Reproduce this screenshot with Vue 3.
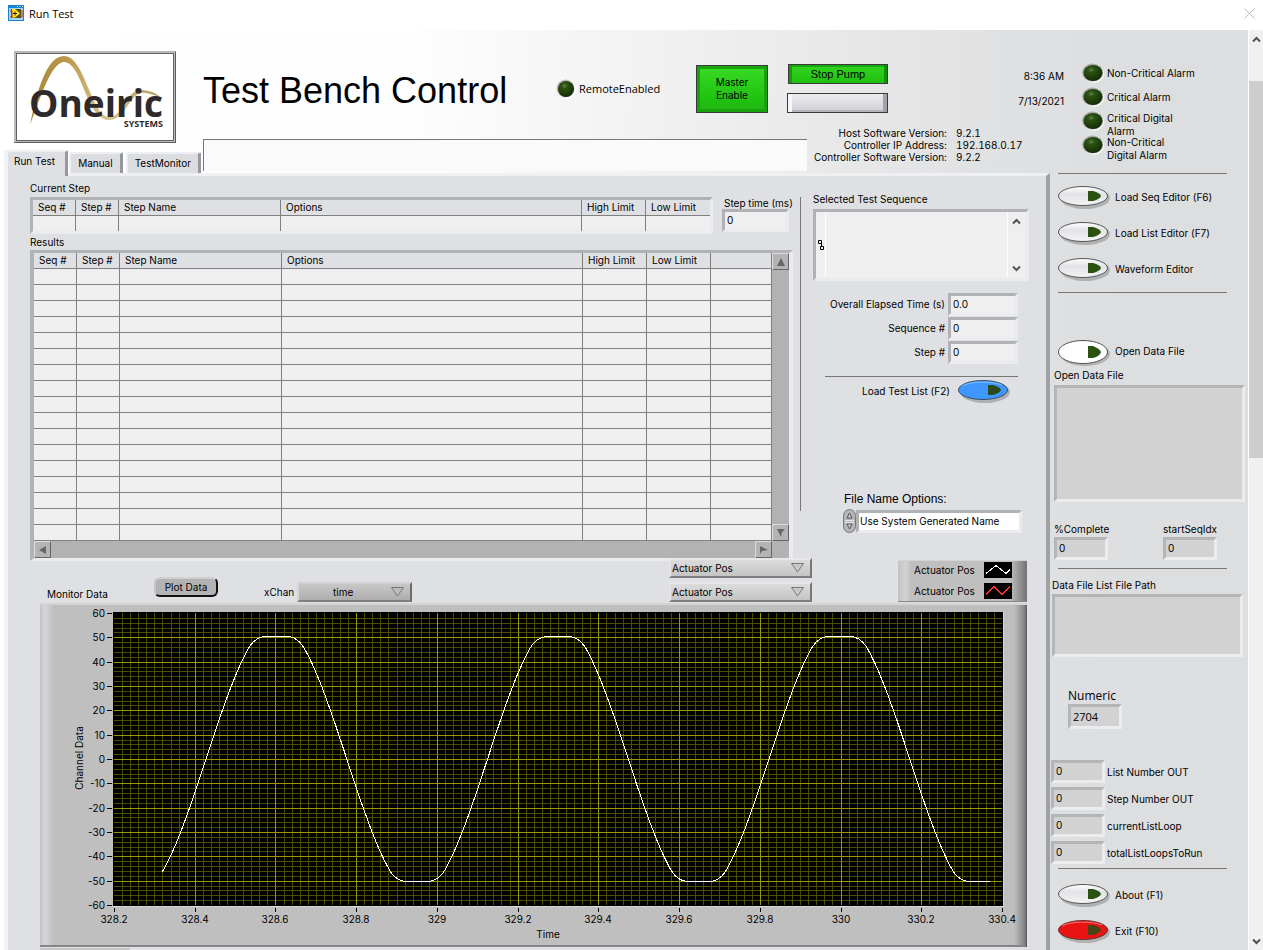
<template>
  <div class="window">
    <header class="titlebar">
      <svg class="app-icon" width="16" height="16" viewBox="0 0 16 16">
        <rect width="16" height="16" fill="#1883d7" />
        <path d="M9 1.5h1M11.5 1.5h1M14 1.5h1" stroke="#ffe38a" />
        <rect x="1" y="3" width="14" height="12" fill="#a9d5f5" />
        <rect x="3" y="4" width="10" height="9" fill="#55551c" />
        <path d="M4 4h3l5 4.500-5 4h-3z" fill="#ffe81a" />
        <path d="M2 6h2v6H2M14 5v7h-2" fill="none" stroke="#c22" />
        <path d="M5 8.500h4M7 6.500v4" stroke="#222" />
      </svg>
      <span class="titlebar-text">Run Test</span>
      <button class="close" aria-label="Close">
        <svg width="11" height="11" viewBox="0 0 11 11">
          <path d="M.5.5l10 10M10.5.5l-10 10" stroke="#bbb" fill="none" />
        </svg>
      </button>
    </header>

    <div class="client">
      <div class="panel">
        <div class="head">
          <div class="head-left">
            <div class="logo">
              <svg width="156" height="86" viewBox="0 0 156 86">
                <defs>
                  <linearGradient id="gold" x1="0" x2="1">
                    <stop offset="0" stop-color="#a88a3c" />
                    <stop offset=".25" stop-color="#b89546" />
                    <stop offset=".6" stop-color="#d9c694" />
                    <stop offset="1" stop-color="#b39a5b" />
                  </linearGradient>
                </defs>
                <path
                  d="M13 71C20 36 30 2 47 2C68 2 74 62 92 63C107 63 109 35 124 36C130 36 138 38 143 43C134 40 128 38 124 39C112 41 108 67 91 66C69 64 65 8 47 8C34 9 24 42 13 71Z"
                  fill="url(#gold)"
                />
                <text x="12" y="63" class="logo-name">Oneiric</text>
                <text x="146" y="73" text-anchor="end" class="logo-sub">SYSTEMS</text>
              </svg>
            </div>
            <div class="tabs" role="tablist">
              <button
                v-for="tab in tabs"
                :key="tab"
                class="tab"
                :class="{ active: tab === activeTab }"
                role="tab"
                :aria-selected="tab === activeTab"
                @click="activeTab = tab"
              >
                {{ tab }}
              </button>
            </div>
          </div>

          <div class="head-main">
            <div class="head-controls">
              <h1>Test Bench Control</h1>
              <div class="remote">
                <svg width="20" height="20" viewBox="0 0 20 20">
                  <circle cx="11" cy="11" r="9" fill="#fff" />
                  <circle cx="9.500" cy="9.500" r="9" fill="#bbb" />
                  <circle cx="10" cy="10" r="8" fill="url(#led)" />
                </svg>
                RemoteEnabled
              </div>
              <button class="push master">Master<br />Enable</button>
              <div class="pump">
                <button class="push stop">Stop Pump</button>
                <button class="push blank" aria-label="Pump"></button>
              </div>
              <div class="clock">
                <span>8:36 AM</span>
                <span>7/13/2021</span>
              </div>
            </div>
            <div class="head-message">
              <input class="message" aria-label="Message" readonly />
              <dl class="versions">
                <template v-for="v in versions" :key="v.name">
                  <dt>{{ v.name }}</dt>
                  <dd>{{ v.value }}</dd>
                </template>
              </dl>
            </div>
          </div>

          <ul class="alarms">
            <li v-for="alarm in alarms" :key="alarm.join()" :class="{ single: alarm.length === 1 }">
              <svg width="22" height="20" viewBox="0 0 22 20">
                <defs>
                  <radialGradient id="led" cx=".4" cy=".3" r=".7">
                    <stop offset="0" stop-color="#5d8148" />
                    <stop offset=".25" stop-color="#2d5214" />
                    <stop offset="1" stop-color="#142c04" />
                  </radialGradient>
                </defs>
                <ellipse cx="12" cy="11" rx="10" ry="9" fill="#f4f4f4" />
                <ellipse cx="10.500" cy="9.500" rx="10.500" ry="9" fill="#a9aaab" />
                <ellipse cx="11" cy="10" rx="9.500" ry="8" fill="url(#led)" />
              </svg>
              <span><template v-for="(line, i) in alarm" :key="i"><br v-if="i" />{{ line }}</template></span>
            </li>
          </ul>
        </div>

        <div class="main">
          <section class="tab-panel">
            <div class="upper">
              <div class="tables">
                <div class="caption">Current Step</div>
                <div class="current-row">
                  <div class="bevel current">
                    <table class="grid">
                      <colgroup>
                        <col class="w-43" /><col class="w-43" /><col class="w-162" /><col /><col class="w-64" /><col class="w-64" />
                      </colgroup>
                      <thead>
                        <tr>
                          <th v-for="c in columns" :key="c">{{ c }}</th>
                        </tr>
                      </thead>
                      <tbody>
                        <tr>
                          <td v-for="c in columns" :key="c"></td>
                        </tr>
                      </tbody>
                    </table>
                  </div>
                  <div class="step-time">
                    <label for="stepTime">Step time (ms)</label>
                    <input id="stepTime" class="bevel field" value="0" readonly />
                  </div>
                </div>
                <div class="caption results-caption">Results</div>
                <div class="bevel results">
                  <div class="results-body">
                    <table class="grid wide">
                      <colgroup>
                        <col class="w-43" /><col class="w-43" /><col class="w-162" /><col /><col class="w-64" /><col class="w-64" /><col class="w-61" />
                      </colgroup>
                      <thead>
                        <tr>
                          <th v-for="c in columns" :key="c">{{ c }}</th>
                          <th></th>
                        </tr>
                      </thead>
                      <tbody>
                        <tr v-for="r in 17" :key="r">
                          <td v-for="c in 7" :key="c"></td>
                        </tr>
                      </tbody>
                    </table>
                    <div class="bar vertical">
                      <button class="bar-btn" aria-label="Scroll up">
                        <svg width="8" height="8" viewBox="0 0 8 8"><path d="M4 0l4 8H0z" fill="#666" /></svg>
                      </button>
                      <button class="bar-btn" aria-label="Scroll down">
                        <svg width="8" height="8" viewBox="0 0 8 8"><path d="M4 8L0 0h8L5 3z" fill="#666" /></svg>
                      </button>
                    </div>
                  </div>
                  <div class="bar horizontal">
                    <button class="bar-btn" aria-label="Scroll left">
                      <svg width="8" height="8" viewBox="0 0 8 8"><path d="M0 4l7-4v8z" fill="#666" /></svg>
                    </button>
                    <button class="bar-btn" aria-label="Scroll right">
                      <svg width="8" height="8" viewBox="0 0 8 8"><path d="M8 4L0 0v8l2-3z" fill="#666" /></svg>
                    </button>
                  </div>
                </div>
              </div>

              <div class="divider"></div>

              <div class="sequence">
                <label for="selectedSeq">Selected Test Sequence</label>
                <div class="bevel seq-box">
                  <svg class="path-glyph" width="8" height="12" viewBox="0 0 8 12">
                    <path d="M1.500 1.500h3v3h-3zM4.500 4.500v3M3.500 7.500h3v3h-3z" fill="none" stroke="#000" />
                  </svg>
                  <textarea id="selectedSeq" readonly></textarea>
                  <div class="seq-scroll">
                    <svg width="9" height="7" viewBox="0 0 9 7"><path d="M1 5.500l3.500-3.500L8 5.500" fill="none" stroke="#555" stroke-width="2" /></svg>
                    <svg width="9" height="7" viewBox="0 0 9 7"><path d="M1 1.500L4.500 5 8 1.500" fill="none" stroke="#555" stroke-width="2" /></svg>
                  </div>
                </div>
                <div class="readouts">
                  <template v-for="r in readouts" :key="r.id">
                    <label :for="r.id">{{ r.name }}</label>
                    <input :id="r.id" class="bevel field" :value="r.value" readonly />
                  </template>
                </div>
                <hr class="rule" />
                <button class="oval load-list">
                  Load Test List (F2)
                  <svg width="56" height="28" viewBox="0 0 56 28">
                    <ellipse cx="29" cy="15" rx="25" ry="11" fill="#aeb0b4" />
                    <ellipse cx="27" cy="13" rx="24.500" ry="9.500" fill="#3d97ff" stroke="#3c4d66" />
                    <path d="M6 9C15 4 36 4 46 8" fill="none" stroke="#7ec0ff" />
                    <path d="M32 8h5q7 2 8 5q-1 3-8 5h-5z" fill="#2b4b1c" />
                  </svg>
                </button>
                <label class="file-label" for="fileName">File Name Options:</label>
                <div class="ring">
                  <svg width="13" height="24" viewBox="0 0 13 24">
                    <rect x=".5" y=".5" width="12" height="23" rx="6" fill="#b4b5b7" stroke="#77787a" />
                    <path d="M2 11.500h9M2 13.500h9" stroke="#e8e8e8" />
                    <path d="M6.500 4L9 9H4z" fill="#ccc" stroke="#555" />
                    <path d="M6.500 20L4 15h5z" fill="#ccc" stroke="#555" />
                  </svg>
                  <input id="fileName" class="bevel" value="Use System Generated Name" />
                </div>
              </div>
            </div>

            <div class="controls">
              <div class="monitor-label">Monitor Data</div>
              <button class="plot-btn">Plot Data</button>
              <div class="xchan">
                <label for="xchan">xChan</label>
                <div class="drop">
                  <select id="xchan" class="centered">
                    <option>time</option>
                  </select>
                  <svg class="drop-arrow" width="13" height="10" viewBox="0 0 13 10"><path d="M.5.500h12l-6 8.500z" fill="#bcbcbc" stroke="#777" /></svg>
                </div>
              </div>
              <div class="channels">
                <div v-for="n in 2" :key="n" class="drop light">
                  <select :aria-label="'Channel ' + n">
                    <option>Actuator Pos</option>
                  </select>
                  <svg class="drop-arrow" width="13" height="10" viewBox="0 0 13 10"><path d="M.5.500h12l-6 8.500z" fill="#c8c8c8" stroke="#777" /></svg>
                </div>
              </div>
              <div class="legend">
                <div class="legend-row">
                  Actuator Pos
                  <svg width="28" height="16" viewBox="0 0 28 16">
                    <rect width="28" height="16" fill="#000" />
                    <path class="sample" d="M2 11.500l10-8 10 8 4-4" stroke="#fff" />
                  </svg>
                </div>
                <div class="legend-row">
                  Actuator Pos
                  <svg width="28" height="16" viewBox="0 0 28 16">
                    <rect width="28" height="16" fill="#000" />
                    <path class="sample" d="M2 11.500l8-8 8 8 8-8" stroke="#ff3232" />
                  </svg>
                </div>
              </div>
            </div>

            <div class="chart">
              <svg viewBox="0 0 987 344">
                <defs>
                  <linearGradient id="edgeL" x1="0" x2="1">
                    <stop offset="0" stop-color="#c4c4c4" />
                    <stop offset=".4" stop-color="#d6d6d6" />
                    <stop offset="1" stop-color="#bfbfbf" />
                  </linearGradient>
                  <linearGradient id="edgeR" x1="0" x2="1">
                    <stop offset="0" stop-color="#bfbfbf" />
                    <stop offset=".8" stop-color="#848484" />
                    <stop offset="1" stop-color="#5a5a5a" />
                  </linearGradient>
                </defs>
                <rect width="987" height="344" fill="#bfbfbf" />
                <rect width="13" height="344" fill="url(#edgeL)" />
                <rect width="987" height="2" fill="#d4d4d4" />
                <rect x="974" y="2" width="13" height="342" fill="url(#edgeR)" />
                <rect y="342" width="985" height="2" fill="#858585" />
                <rect x="73" y="9" width="891" height="295" fill="#d8d8d8" />
                <rect x="73" y="9" width="890" height="294" fill="#000" />
                <path :d="minorPath" stroke="#4d4d00" fill="none" />
                <path :d="majorPath" stroke="#999900" fill="none" />
                <path :d="tickPath" stroke="#000" fill="none" />
                <polyline :points="curve" class="trace" />
                <text v-for="t in yTicks" :key="'y' + t.label" x="65" :y="t.pos + 4" text-anchor="end">{{ t.label }}</text>
                <text v-for="t in xTicks" :key="'x' + t.label" :x="t.pos" y="320" text-anchor="middle">{{ t.label }}</text>
                <text x="508" y="335" text-anchor="middle">Time</text>
                <text transform="translate(43 155) rotate(-90)" text-anchor="middle">Channel Data</text>
              </svg>
            </div>
            <div class="next-strip"></div>
          </section>

          <aside class="side">
            <hr class="rule" />
            <div class="side-buttons">
              <button v-for="b in editors" :key="b" class="oval">
                <svg width="56" height="28" viewBox="0 0 56 28">
                  <ellipse cx="29" cy="15" rx="25" ry="11" fill="#b0b1b2" />
                  <ellipse cx="27" cy="13" rx="24.500" ry="9.500" fill="url(#pearl)" stroke="#555" />
                  <path d="M32 8h5q7 2 8 5q-1 3-8 5h-5z" fill="#2b5210" />
                </svg>
                {{ b }}
              </button>
            </div>
            <hr class="rule" />
            <button class="oval open-file">
              <svg width="56" height="34" viewBox="0 0 56 34">
                <defs>
                  <linearGradient id="pearl" x1="0" x2="0" y1="0" y2="1">
                    <stop offset="0" stop-color="#fff" />
                    <stop offset=".4" stop-color="#e2e3e7" />
                    <stop offset="1" stop-color="#f4f4f6" />
                  </linearGradient>
                </defs>
                <ellipse cx="29" cy="20" rx="25" ry="12" fill="#b0b1b2" />
                <ellipse cx="27" cy="18" rx="24.500" ry="11.500" fill="#fff" stroke="#555" />
                <path d="M32 12h5q7 3 8 6q-1 4-8 6h-5z" fill="#2b5210" />
              </svg>
              Open Data File
            </button>
            <label class="file-caption" for="openData">Open Data File</label>
            <textarea id="openData" class="bevel grey open-data" readonly></textarea>
            <div class="pair">
              <div>
                <label for="complete">%Complete</label>
                <input id="complete" class="bevel grey field" value="0" readonly />
              </div>
              <div>
                <label for="startSeq">startSeqIdx</label>
                <input id="startSeq" class="bevel grey field" value="0" readonly />
              </div>
            </div>
            <hr class="rule" />
            <label class="path-caption" for="listPath">Data File List File Path</label>
            <textarea id="listPath" class="bevel grey list-path" readonly></textarea>
            <div class="numeric">
              <label for="numeric">Numeric</label>
              <input id="numeric" class="bevel grey" value="2704" readonly />
            </div>
            <div class="outputs">
              <div v-for="o in outputs" :key="o" class="output">
                <input :id="o" class="bevel grey field" value="0" readonly />
                <label :for="o">{{ o }}</label>
              </div>
            </div>
            <hr class="rule" />
            <div class="side-buttons bottom">
              <button class="oval">
                <svg width="56" height="28" viewBox="0 0 56 28">
                  <ellipse cx="29" cy="15" rx="25" ry="11" fill="#b0b1b2" />
                  <ellipse cx="27" cy="13" rx="24.500" ry="9.500" fill="url(#pearl)" stroke="#555" />
                  <path d="M32 8h5q7 2 8 5q-1 3-8 5h-5z" fill="#2b5210" />
                </svg>
                About (F1)
              </button>
              <button class="oval">
                <svg width="56" height="28" viewBox="0 0 56 28">
                  <ellipse cx="29" cy="15" rx="25" ry="11" fill="#b0b1b2" />
                  <ellipse cx="27" cy="13" rx="24.500" ry="9.500" fill="#e81414" stroke="#633" />
                  <path d="M6 9C15 4 36 4 46 8" fill="none" stroke="#ff7070" />
                  <path d="M32 8h5q7 2 8 5q-1 3-8 5h-5z" fill="#4a4416" />
                </svg>
                Exit (F10)
              </button>
            </div>
          </aside>
        </div>
      </div>

      <div class="scrollbar">
        <svg width="9" height="7" viewBox="0 0 9 7"><path d="M1 5.500l3.500-3.500L8 5.500" fill="none" stroke="#505050" stroke-width="2" /></svg>
        <div class="track"><div class="thumb"></div></div>
        <svg width="9" height="7" viewBox="0 0 9 7"><path d="M1 1.500L4.500 5 8 1.500" fill="none" stroke="#505050" stroke-width="2" /></svg>
      </div>
    </div>
  </div>
</template>

<script setup>
import { ref } from 'vue'

const tabs = ['Run Test', 'Manual', 'TestMonitor']
const activeTab = ref('Run Test')

const versions = [
  { name: 'Host Software Version:', value: '9.2.1' },
  { name: 'Controller IP Address:', value: '192.168.0.17' },
  { name: 'Controller Software Version:', value: '9.2.2' },
]

const alarms = [
  ['Non-Critical Alarm'],
  ['Critical Alarm'],
  ['Critical Digital', 'Alarm'],
  ['Non-Critical', 'Digital Alarm'],
]

const columns = ['Seq #', 'Step #', 'Step Name', 'Options', 'High Limit', 'Low Limit']

const readouts = [
  { id: 'elapsed', name: 'Overall Elapsed Time (s)', value: '0.0' },
  { id: 'seqNo', name: 'Sequence #', value: '0' },
  { id: 'stepNo', name: 'Step #', value: '0' },
]

const editors = ['Load Seq Editor (F6)', 'Load List Editor (F7)', 'Waveform Editor']
const outputs = ['List Number OUT', 'Step Number OUT', 'currentListLoop', 'totalListLoopsToRun']

// plot area inside the chart drawing
const LEFT = 74
const TOP = 10
const WIDTH = 888
const HEIGHT = 292
const T_MIN = 328.2
const T_SPAN = 2.2

const xPos = (t) => LEFT + ((t - T_MIN) / T_SPAN) * WIDTH
const yPos = (v) => TOP + ((60 - v) / 120) * HEIGHT

const xTicks = []
for (let i = 0; i <= 11; i++) {
  const t = T_MIN + i * 0.2
  xTicks.push({ label: String(Number(t.toFixed(1))), pos: Math.round(xPos(t)) })
}
const yTicks = []
for (let v = 60; v >= -60; v -= 10) {
  yTicks.push({ label: String(v), pos: Math.round(yPos(v)) })
}

const vLine = (x) => `M${x + 0.5} ${TOP}V${TOP + HEIGHT}`
const hLine = (y) => `M${LEFT} ${y + 0.5}H${LEFT + WIDTH}`

let minorPath = ''
for (let i = 1; i < 110; i++) {
  if (i % 10) minorPath += vLine(Math.round(LEFT + (i * WIDTH) / 110))
}
for (let i = 1; i < 60; i++) {
  if (i % 5) minorPath += hLine(Math.round(TOP + (i * HEIGHT) / 60))
}
const majorPath =
  xTicks.slice(1, -1).map((t) => vLine(t.pos)).join('') +
  yTicks.slice(1, -1).map((t) => hLine(t.pos)).join('')
const tickPath =
  xTicks.map((t) => `M${t.pos + 0.5} 305v4`).join('') +
  yTicks.map((t) => `M67 ${t.pos + 0.5}h5`).join('')

// actuator position: sine wave limited at the end stops
const PERIOD = 0.6974
const CROSSING = 328.428
const knee = [
  [0.98, 46.5],
  [1.06, 48.2],
  [1.14, 49.3],
  [1.22, 50],
  [1.32, 50.4],
  [1.6, 50.4],
]
function position(t) {
  const phase = (2 * Math.PI * (t - CROSSING)) / PERIOD
  const s = Math.sin(phase)
  const a = Math.asin(Math.abs(s))
  let v = 56 * Math.sin(a)
  if (a > knee[0][0]) {
    const k = knee.findIndex((p) => p[0] >= a)
    const [a0, v0] = knee[k - 1]
    const [a1, v1] = knee[k]
    v = v0 + ((a - a0) / (a1 - a0)) * (v1 - v0)
  }
  return s < 0 ? -v : v
}
const points = []
for (let t = 328.32; t <= 330.37; t += 0.005) {
  points.push(`${xPos(t).toFixed(1)},${yPos(position(t)).toFixed(1)}`)
}
const curve = points.join(' ')
</script>

<style>
body {
  margin: 0;
}
</style>

<style scoped>
* {
  box-sizing: border-box;
}
.window {
  display: flex;
  flex-direction: column;
  height: 100vh;
  overflow: hidden;
  background: #fff;
  color: #000;
  font-family: Inter, 'Liberation Sans', sans-serif;
  font-size: 10px;
  line-height: 12px;
}
button,
input,
textarea,
select {
  font: inherit;
  color: inherit;
  margin: 0;
  border-radius: 0;
}
button {
  border: 0;
  padding: 0;
  background: none;
}
svg {
  display: block;
  flex: none;
}
label {
  white-space: nowrap;
}
.titlebar {
  display: flex;
  align-items: center;
  flex: 0 0 30px;
  padding: 0 8px;
  font-family: 'Open Sans', 'Noto Sans', sans-serif;
  font-size: 11px;
}
.app-icon {
  margin-bottom: 4px;
}
.titlebar-text {
  padding: 0 0 3px 5px;
}
.close {
  margin: 0 0 4px auto;
}
.client {
  display: flex;
  flex: 1;
  min-height: 0;
}
.panel {
  display: flex;
  flex-direction: column;
  flex: 1;
  min-width: 0;
  background: linear-gradient(92deg, #fff 0, #fefefe 32%, #f2f2f2 50%, #e8e8e9 66%, #e0e1e2 78%, #dddee0 88%);
}

/* header */
.head {
  display: flex;
  flex: 0 0 143px;
}
.head-left {
  display: flex;
  flex-direction: column;
  flex: 0 0 203px;
}
.logo {
  width: 162px;
  height: 92px;
  margin: 21px 0 0 14px;
  padding: 2px;
  border: 1px solid;
  border-color: #b5b5b5 #5c5c5c #5c5c5c #b5b5b5;
  box-shadow: inset 0 0 0 1px #bdbdbd, inset 0 0 0 2px #606060;
  background: #fff;
}
.logo-name {
  font: 700 37px 'Open Sans', sans-serif;
  fill: #2e292b;
}
.logo-sub {
  font: 700 9px 'Open Sans', sans-serif;
  fill: #2e292b;
}
.tabs {
  display: flex;
  align-items: flex-end;
  gap: 3px;
  margin: auto 0 0 4px;
}
.tab {
  height: 21px;
  padding: 0 7px 2px;
  background: #dcdde1;
  border: 2px solid #eeeff3;
  border-right: 3px solid #97989b;
  border-bottom: 0;
  border-radius: 2px 2px 0 0;
}
.tab.active {
  position: relative;
  height: 26px;
  margin: 0 -2px -3px 0;
  padding: 0 10px 7px 6px;
  background: #dfe0e4;
  border-left: 4px solid #f1f2f6;
}
.head-main {
  display: flex;
  flex-direction: column;
  flex: 1;
}
.head-controls {
  display: flex;
  align-items: center;
  flex: 0 0 97px;
  padding: 20px 18px 0 0;
}
h1 {
  margin: 0;
  width: 353px;
  padding-top: 4px;
  font: 36px/40px 'Liberation Sans', Arial, sans-serif;
  white-space: nowrap;
}
.remote {
  display: flex;
  align-items: center;
  gap: 3px;
  width: 140px;
  font-family: 'Open Sans', 'Noto Sans', sans-serif;
  font-size: 11px;
}
.push {
  border: 1px solid #3a3a3a;
}
.master {
  width: 72px;
  height: 48px;
  line-height: 13px;
  background: linear-gradient(#3adb25, #1fc310 70%, #22b514);
  box-shadow: inset 0 0 0 3px #18a20c;
}
.pump {
  display: flex;
  flex-direction: column;
  gap: 9px;
  width: 101px;
  margin-left: 19px;
}
.stop {
  height: 20px;
  margin-left: 1px;
  font-family: 'Liberation Sans', Arial, sans-serif;
  font-size: 11px;
  background: linear-gradient(#33d520, #20c010);
  box-shadow: inset -3px 0 0 #149009, inset 3px 0 0 #159c0a, inset 0 2px 0 #18a90c;
}
.blank {
  height: 20px;
  background: linear-gradient(#ececf0, #cfd0d5);
  box-shadow: inset -4px 0 0 #a2a3a7, inset 4px 0 0 #f6f6f8, inset 0 -2px 0 #b4b5b8;
}
.clock {
  display: flex;
  flex-direction: column;
  align-items: flex-end;
  gap: 13px;
  margin-left: auto;
}
.head-message {
  display: flex;
}
.message {
  flex: 1;
  min-width: 0;
  height: 32px;
  margin-top: 12px;
  background: #fafafa;
  border: 1px solid #777;
  border-width: 1px 0 0 1px;
}
.versions {
  display: grid;
  grid-template-columns: 131px 1fr;
  column-gap: 9px;
  align-content: start;
  flex: 0 0 266px;
  margin: 0 0 0 9px;
  white-space: nowrap;
}
.versions dt {
  justify-self: end;
}
.versions dd {
  margin: 0;
  font-variant-numeric: tabular-nums;
}
.alarms {
  flex: 0 0 166px;
  margin: 0;
  padding: 31px 0 0;
  list-style: none;
  line-height: 13px;
}
.alarms li {
  display: flex;
  gap: 3px;
  height: 24px;
}
.alarms svg {
  margin-top: 2px;
}
.alarms span {
  padding-top: 3px;
}
.alarms .single span {
  padding-top: 6px;
}

/* tab page */
.main {
  display: flex;
  flex: 1;
  min-height: 0;
}
.tab-panel {
  flex: 1;
  min-width: 0;
  margin-left: 4px;
  background: #dfe0e4;
  border-top: 3px solid #eff0f4;
  border-left: 4px solid #f1f2f6;
  border-right: 4px solid #a0a1a4;
}
.upper {
  display: flex;
}
.bevel {
  border: 3px solid;
  border-color: #b1b2b6 #eaebef #eaebef #b1b2b6;
  background: #efefef;
}
.bevel.grey {
  background: #d2d2d2;
  border-color: #b4b5b6 #ebeced #ebeced #b4b5b6;
}
.field {
  height: 23px;
  padding: 0 2px 1px;
}
.tables {
  flex: 1;
  min-width: 0;
  padding: 6px 0 0 22px;
}
.current-row {
  display: flex;
  gap: 9px;
  margin-top: 3px;
}
.current {
  flex: 1;
  height: 37px;
}
.step-time {
  display: flex;
  flex-direction: column;
  width: 71px;
}
.step-time label {
  padding-left: 2px;
}
.step-time .field {
  width: 67px;
}
.results-caption {
  margin: 2px 0;
}
.results {
  border-left-width: 4px;
  border-right-width: 4px;
}
.results-body {
  display: flex;
}
.grid {
  width: 100%;
  table-layout: fixed;
  border-collapse: separate;
  border-spacing: 0;
}
.grid th,
.grid td {
  height: 16px;
  padding: 0 0 2px 5px;
  border-right: 1px solid #808080;
  border-bottom: 1px solid #808080;
  font-weight: 400;
  text-align: left;
  white-space: nowrap;
}
.grid th {
  background: #dfe0e4;
}
.current .grid td {
  height: 15px;
  border-bottom: 0;
}
.current .grid th:last-child,
.current .grid td:last-child {
  border-right: 0;
}
.w-43 {
  width: 43px;
}
.w-162 {
  width: 162px;
}
.w-64 {
  width: 64px;
}
.w-61 {
  width: 61px;
}
.bar {
  display: flex;
  justify-content: space-between;
  background: #b2b2b2;
}
.vertical {
  flex-direction: column;
  flex: 0 0 17px;
}
.horizontal {
  height: 17px;
  padding-right: 17px;
}
.bar-btn {
  display: flex;
  align-items: center;
  justify-content: center;
  width: 17px;
  height: 17px;
  background: #b4b4b4;
  border: 1px solid;
  border-color: #ddd #666 #666 #ddd;
}
.divider {
  width: 1px;
  height: 314px;
  margin: 21px 12px 0 7px;
  background: #777;
}
.sequence {
  flex: 0 0 233px;
  display: flex;
  flex-direction: column;
  align-items: flex-start;
  padding-top: 17px;
}
.seq-box {
  display: flex;
  align-items: center;
  width: 216px;
  height: 72px;
  margin-top: 4px;
}
.path-glyph {
  margin: 0 0 0 1px;
}
.seq-box textarea {
  flex: 1;
  min-width: 0;
  height: 64px;
  padding: 2px;
  border: 0;
  border-left: 1px solid #fff;
  border-right: 1px solid #fff;
  background: none;
  resize: none;
}
.seq-scroll {
  display: flex;
  flex-direction: column;
  justify-content: space-between;
  width: 18px;
  height: 54px;
  padding-left: 4px;
}
.readouts {
  display: grid;
  grid-template-columns: 132px 70px;
  column-gap: 3px;
  row-gap: 1px;
  align-items: center;
  margin-top: 12px;
}
.readouts label {
  justify-self: end;
  padding-bottom: 2px;
}
.readouts input {
  width: 70px;
}
.rule {
  width: 193px;
  height: 1px;
  margin: 12px 0 0 12px;
  border: 0;
  background: #777;
}
.oval {
  display: flex;
  align-items: center;
  gap: 3px;
  height: 36px;
  white-space: nowrap;
}
.load-list {
  gap: 6px;
  height: 28px;
  margin-left: 49px;
}
.file-label {
  margin: 87px 0 0 31px;
  font: 12px/14px 'Liberation Sans', Arial, sans-serif;
}
.ring {
  display: flex;
  align-items: center;
  width: 179px;
  margin: 3px 0 0 30px;
}
.ring input {
  flex: 1;
  min-width: 0;
  height: 23px;
  padding: 0 1px 1px;
  background: #fff;
}

/* chart controls */
.controls {
  display: flex;
  align-items: flex-end;
  height: 44px;
  margin: -2px 19px 0 39px;
}
.monitor-label {
  width: 107px;
  padding-bottom: 3px;
}
.plot-btn {
  width: 64px;
  height: 20px;
  margin-bottom: 6px;
  background: #b3b3b3;
  border: 2px solid;
  border-color: #d0d0d0 #111 #111 #c4c4c4;
  border-radius: 6px;
}
.xchan {
  display: flex;
  align-items: center;
  gap: 3px;
  margin: 0 0 1px 46px;
}
.drop {
  position: relative;
  width: 115px;
  height: 20px;
}
.drop select {
  appearance: none;
  width: 100%;
  height: 100%;
  padding: 0 20px 1px 3px;
  background: linear-gradient(#c8c8c8, #adadad);
  border: 2px solid;
  border-color: #d2d2d2 #6b6b6b #808080 #d6d6d6;
}
.drop .centered {
  padding-right: 26px;
  text-align-last: center;
}
.drop.light {
  width: 143px;
}
.drop.light select {
  padding-left: 1px;
  background: linear-gradient(#dcdcdc, #c4c4c4);
  border-color: #e8e8e8 #777 #808080 #e4e4e4;
}
.drop-arrow {
  position: absolute;
  top: 5px;
  right: 8px;
  pointer-events: none;
}
.channels {
  display: flex;
  flex-direction: column;
  gap: 4px;
  margin: 0 0 1px auto;
}
.legend {
  display: flex;
  flex-direction: column;
  justify-content: center;
  gap: 5px;
  width: 129px;
  height: 42px;
  margin: 0 0 1px 86px;
  padding: 0 11px 2px 0;
  background: linear-gradient(90deg, #c2c2c2, #d4d4d4 8px, #bfbfbf 13px, #bfbfbf 112px, #777 128px);
  border-top: 1px solid #d4d4d4;
  border-bottom: 1px solid #858585;
}
.legend-row {
  display: flex;
  align-items: center;
  justify-content: space-between;
  padding: 0 4px 0 16px;
}
.chart {
  margin: 0 19px 0 32px;
}
.chart svg {
  width: 100%;
}
.chart text {
  font-size: 10px;
}
.sample {
  fill: none;
  shape-rendering: crispEdges;
}
.trace {
  fill: none;
  stroke: #fff;
  shape-rendering: crispEdges;
}
.next-strip {
  width: 90px;
  height: 10px;
  margin: 1px 0 0 32px;
  background: #c4c4c4;
}

/* side panel */
.side {
  display: flex;
  flex-direction: column;
  align-items: flex-start;
  flex: 0 0 198px;
}
.side > * {
  flex: none;
}
.side .rule {
  width: 169px;
  margin: 0 0 0 8px;
}
.side textarea {
  width: 191px;
  resize: none;
}
.side .field {
  width: 54px;
}
.side-buttons {
  margin: 5px 0 5px 6px;
}
.side-buttons.bottom {
  margin-top: 8px;
}
.open-file {
  margin: 40px 0 0 6px;
}
.file-caption {
  margin-left: 4px;
}
.open-data {
  height: 117px;
  margin: 4px 0 0 4px;
}
.pair {
  display: flex;
  gap: 55px;
  margin: 21px 0 8px 4px;
}
.pair > div {
  display: flex;
  flex-direction: column;
  gap: 2px;
  width: 54px;
}
.path-caption {
  margin: 10px 0 3px 2px;
}
.list-path {
  height: 63px;
  margin-left: 2px;
}
.numeric {
  display: flex;
  flex-direction: column;
  gap: 1px;
  margin: 32px 0 0 18px;
  font-family: 'Open Sans', 'Noto Sans', sans-serif;
  font-size: 12px;
  line-height: 14px;
}
.numeric input {
  width: 54px;
  height: 25px;
  padding: 0 2px;
  font-size: 11px;
}
.outputs {
  display: flex;
  flex-direction: column;
  gap: 4px;
  margin: 31px 0 4px 1px;
}
.output {
  display: flex;
  align-items: center;
  gap: 2px;
}

/* window scrollbar */
.scrollbar {
  display: flex;
  flex-direction: column;
  align-items: center;
  flex: 0 0 15px;
  padding: 6px 0 5px;
  border-left: 1px solid #fff;
  background: #f0f0f0;
}
.track {
  flex: 1;
  width: 100%;
  padding-top: 38px;
}
.thumb {
  height: 44%;
  background: #cdcdcd;
}
</style>
